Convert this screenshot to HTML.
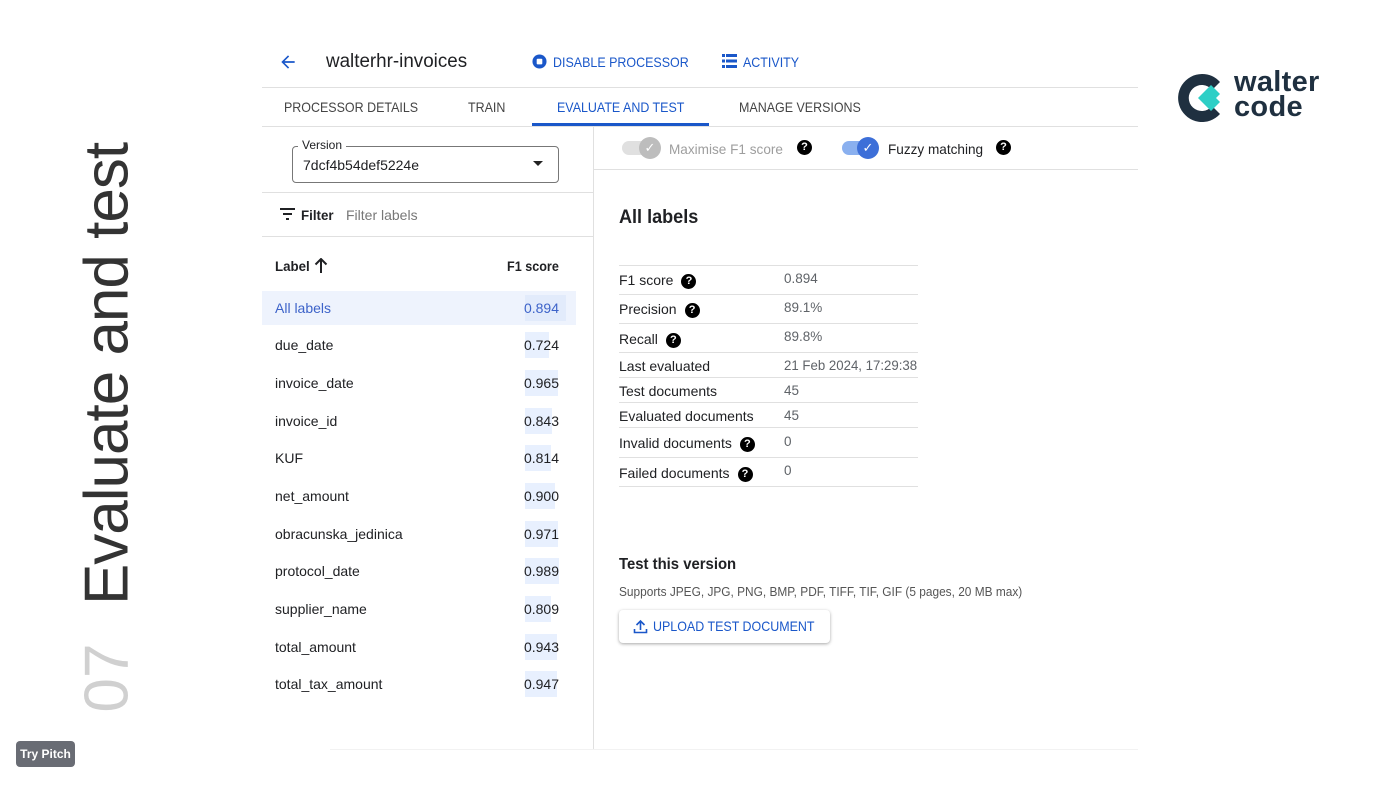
<!DOCTYPE html>
<html><head><meta charset="utf-8"><style>
*{margin:0;padding:0;box-sizing:border-box}
body{width:1400px;height:788px;background:#fff;position:relative;overflow:hidden;font-family:"Liberation Sans",Arial,sans-serif;color:#202124}
.a{position:absolute;white-space:nowrap}
.blue{color:#1a57c9}
.t14{font-size:14px}
.n{display:inline-block;transform:scaleX(0.89);transform-origin:left}
.hl{position:absolute;height:1px;background:#e0e0e0}
.q{display:inline-block;width:15px;height:15px;border-radius:50%;background:#000;color:#fff;font-size:11px;font-weight:bold;text-align:center;line-height:15px;vertical-align:middle;margin-left:8px}
.row{position:absolute;left:262px;width:314px;height:34px}
.row .l{position:absolute;left:13px;top:9px;font-size:14px}
.row .v{position:absolute;right:17px;top:9px;font-size:14px}
.row .bar{position:absolute;top:4px;height:26px;background:#e8f0fe;left:263px}
.m{position:absolute;left:619px;font-size:14px;color:#202124}
.mv{position:absolute;left:784px;font-size:13.5px;color:#5f6368}
</style></head><body>

<div class="a" style="left:107px;top:374px;transform:translate(-50%,-50%) rotate(-90deg);font-size:62px;font-weight:300;color:#333;letter-spacing:-1px;transform-origin:center">Evaluate and test</div>
<div class="a" style="left:107px;top:678px;transform:translate(-50%,-50%) rotate(-90deg);font-size:62px;font-weight:300;color:#d0d0d0">07</div>
<div class="a" style="left:16px;top:741px;width:59px;height:26px;background:#696c74;border-radius:4px;color:#fff;font-size:12px;font-weight:bold;text-align:center;line-height:26px">Try Pitch</div>

<!-- logo -->
<svg class="a" style="left:1176px;top:72px" width="52" height="52" viewBox="0 0 52 52">
<path d="M26 2 A24 24 0 1 0 44 42 L36 34 A13 13 0 1 1 36 18 L44 10 A24 24 0 0 0 26 2Z" fill="#1f3040"/>
<path d="M22 26 L35 13 L44 22 L40 26 L44 30 L35 39Z" fill="#2ecfc6"/>
</svg>
<div class="a" style="left:1234px;top:70px;font-size:29px;font-weight:bold;color:#1f3040;line-height:25px;letter-spacing:0.3px">walter<br>code</div>

<!-- header -->
<svg class="a" style="left:278px;top:52px" width="20" height="20" viewBox="0 0 24 24"><path d="M20 11H7.8l5.6-5.6L12 4l-8 8 8 8 1.4-1.4L7.8 13H20z" fill="#1a57c9"/></svg>
<div class="a" style="left:326px;top:51px;font-size:19px;color:#202124"><span class="n" style="transform:scaleX(0.99)">walterhr-invoices</span></div>
<svg class="a" style="left:532px;top:54px" width="15" height="15" viewBox="0 0 16 16"><circle cx="8" cy="8" r="7.5" fill="#1a57c9"/><rect x="5" y="5" width="6" height="6" rx="1" fill="#fff"/></svg>
<div class="a blue" style="left:553px;top:54px;font-size:14px;font-weight:500"><span class="n">DISABLE PROCESSOR</span></div>
<svg class="a" style="left:722px;top:54px" width="15" height="14" viewBox="0 0 15 14"><g fill="#1a57c9"><rect x="0" y="0" width="3" height="3"/><rect x="4" y="0" width="11" height="3"/><rect x="0" y="5.5" width="3" height="3"/><rect x="4" y="5.5" width="11" height="3"/><rect x="0" y="11" width="3" height="3"/><rect x="4" y="11" width="11" height="3"/></g></svg>
<div class="a blue" style="left:743px;top:54px;font-size:14px;font-weight:500"><span class="n">ACTIVITY</span></div>

<div class="hl" style="left:262px;top:87px;width:876px"></div>
<div class="a t14" style="left:284px;top:99px;color:#444"><span class="n">PROCESSOR DETAILS</span></div>
<div class="a t14" style="left:468px;top:99px;color:#444"><span class="n">TRAIN</span></div>
<div class="a t14 blue" style="left:557px;top:99px"><span class="n">EVALUATE AND TEST</span></div>
<div class="a t14" style="left:739px;top:99px;color:#444"><span class="n">MANAGE VERSIONS</span></div>
<div class="hl" style="left:262px;top:126px;width:876px"></div>
<div class="a" style="left:532px;top:123px;width:177px;height:3px;background:#1a57c9"></div>

<!-- left panel -->
<div class="a" style="left:593px;top:127px;width:1px;height:623px;background:#e0e0e0"></div>
<div class="a" style="left:292px;top:146px;width:267px;height:37px;border:1px solid #777;border-radius:4px"></div>
<div class="a" style="left:298px;top:138px;background:#fff;padding:0 4px;font-size:12px;color:#202124">Version</div>
<div class="a" style="left:303px;top:157px;font-size:14px">7dcf4b54def5224e</div>
<div class="a" style="left:533px;top:161px;width:0;height:0;border-left:5px solid transparent;border-right:5px solid transparent;border-top:5px solid #222"></div>
<div class="hl" style="left:262px;top:192px;width:331px"></div>
<svg class="a" style="left:280px;top:208px" width="15" height="12" viewBox="0 0 15 12"><g fill="#202124"><rect x="0" y="0" width="15" height="2"/><rect x="3" y="5" width="9" height="2"/><rect x="6" y="10" width="3" height="2"/></g></svg>
<div class="a t14" style="left:301px;top:207px;font-weight:bold"><span class="n" style="transform:scaleX(0.95)">Filter</span></div>
<div class="a t14" style="left:346px;top:207px;color:#777">Filter labels</div>
<div class="hl" style="left:262px;top:236px;width:331px"></div>
<div class="a t14" style="left:275px;top:258px;font-weight:bold"><span class="n" style="transform:scaleX(0.95)">Label</span></div>
<svg class="a" style="left:314px;top:258px" width="14" height="15" viewBox="0 0 14 15"><path d="M7 1v14M1.5 6.5L7 1l5.5 5.5" stroke="#202124" stroke-width="2" fill="none"/></svg>
<div class="a t14" style="left:507px;top:258px;font-weight:bold"><span class="n" style="transform:scaleX(0.9)">F1 score</span></div>

<div class="row" style="top:291px;background:#eef3fd"><div class="bar" style="width:41px;background:#e2ebfb"></div><div class="l" style="color:#3d63c9">All labels</div><div class="v" style="color:#3d63c9">0.894</div></div>
<div class="row" style="top:328px"><div class="bar" style="width:24px"></div><div class="l">due_date</div><div class="v">0.724</div></div>
<div class="row" style="top:366px"><div class="bar" style="width:33px"></div><div class="l">invoice_date</div><div class="v">0.965</div></div>
<div class="row" style="top:404px"><div class="bar" style="width:27px"></div><div class="l">invoice_id</div><div class="v">0.843</div></div>
<div class="row" style="top:441px"><div class="bar" style="width:26px"></div><div class="l">KUF</div><div class="v">0.814</div></div>
<div class="row" style="top:479px"><div class="bar" style="width:30px"></div><div class="l">net_amount</div><div class="v">0.900</div></div>
<div class="row" style="top:517px"><div class="bar" style="width:33px"></div><div class="l">obracunska_jedinica</div><div class="v">0.971</div></div>
<div class="row" style="top:554px"><div class="bar" style="width:34px"></div><div class="l">protocol_date</div><div class="v">0.989</div></div>
<div class="row" style="top:592px"><div class="bar" style="width:26px"></div><div class="l">supplier_name</div><div class="v">0.809</div></div>
<div class="row" style="top:630px"><div class="bar" style="width:32px"></div><div class="l">total_amount</div><div class="v">0.943</div></div>
<div class="row" style="top:667px"><div class="bar" style="width:32px"></div><div class="l">total_tax_amount</div><div class="v">0.947</div></div>
<div class="hl" style="left:330px;top:749px;width:808px;background:#f2f2f2"></div>

<!-- right toolbar -->
<div class="a" style="left:622px;top:141px;width:34px;height:14px;border-radius:7px;background:#e0e0e0"></div>
<div class="a" style="left:639px;top:137px;width:22px;height:22px;border-radius:50%;background:#bdbdbd;color:#fff;font-size:13px;text-align:center;line-height:22px">✓</div>
<div class="a t14" style="left:669px;top:141px;color:#9e9e9e"><span class="n" style="transform:scaleX(0.97)">Maximise F1 score</span></div>
<div class="a q" style="left:797px;top:140px;margin:0">?</div>
<div class="a" style="left:842px;top:141px;width:34px;height:14px;border-radius:7px;background:#8ab0ef"></div>
<div class="a" style="left:857px;top:137px;width:22px;height:22px;border-radius:50%;background:#3d6fd8;color:#fff;font-size:13px;text-align:center;line-height:22px">✓</div>
<div class="a t14" style="left:888px;top:141px"><span class="n" style="transform:scaleX(0.97)">Fuzzy matching</span></div>
<div class="a q" style="left:996px;top:140px;margin:0">?</div>
<div class="hl" style="left:594px;top:169px;width:544px"></div>

<div class="a" style="left:619px;top:207px;font-size:19px;font-weight:bold"><span class="n" style="transform:scaleX(0.95)">All labels</span></div>

<div class="hl" style="left:619px;top:265px;width:299px"></div>
<div class="m" style="top:272px">F1 score<span class="q">?</span></div><div class="mv" style="top:271px">0.894</div>
<div class="hl" style="left:619px;top:294px;width:299px"></div>
<div class="m" style="top:301px">Precision<span class="q">?</span></div><div class="mv" style="top:300px">89.1%</div>
<div class="hl" style="left:619px;top:323px;width:299px"></div>
<div class="m" style="top:331px">Recall<span class="q">?</span></div><div class="mv" style="top:329px">89.8%</div>
<div class="hl" style="left:619px;top:352px;width:299px"></div>
<div class="m" style="top:358px">Last evaluated</div><div class="mv" style="top:358px"><span class="n" style="transform:scaleX(0.98)">21 Feb 2024, 17:29:38</span></div>
<div class="hl" style="left:619px;top:377px;width:299px"></div>
<div class="m" style="top:383px">Test documents</div><div class="mv" style="top:383px">45</div>
<div class="hl" style="left:619px;top:402px;width:299px"></div>
<div class="m" style="top:408px">Evaluated documents</div><div class="mv" style="top:408px">45</div>
<div class="hl" style="left:619px;top:427px;width:299px"></div>
<div class="m" style="top:435px">Invalid documents<span class="q">?</span></div><div class="mv" style="top:434px">0</div>
<div class="hl" style="left:619px;top:457px;width:299px"></div>
<div class="m" style="top:465px">Failed documents<span class="q">?</span></div><div class="mv" style="top:463px">0</div>
<div class="hl" style="left:619px;top:486px;width:299px"></div>

<div class="a" style="left:619px;top:556px;font-size:16px;font-weight:bold"><span class="n" style="transform:scaleX(0.93)">Test this version</span></div>
<div class="a" style="left:619px;top:585px;font-size:12.5px;color:#555"><span class="n" style="transform:scaleX(0.95)">Supports JPEG, JPG, PNG, BMP, PDF, TIFF, TIF, GIF (5 pages, 20 MB max)</span></div>
<div class="a" style="left:619px;top:610px;width:211px;height:33px;border-radius:4px;background:#fff;box-shadow:0 1px 3px rgba(0,0,0,.35)"></div>
<svg class="a" style="left:633px;top:619px" width="15" height="15" viewBox="0 0 15 15"><path d="M7.5 11V2M3.5 6l4-4 4 4M1.5 10v3.5h12V10" stroke="#1a57c9" stroke-width="1.6" fill="none"/></svg>
<div class="a t14 blue" style="left:653px;top:618px;font-weight:500"><span class="n">UPLOAD TEST DOCUMENT</span></div>
</body></html>
